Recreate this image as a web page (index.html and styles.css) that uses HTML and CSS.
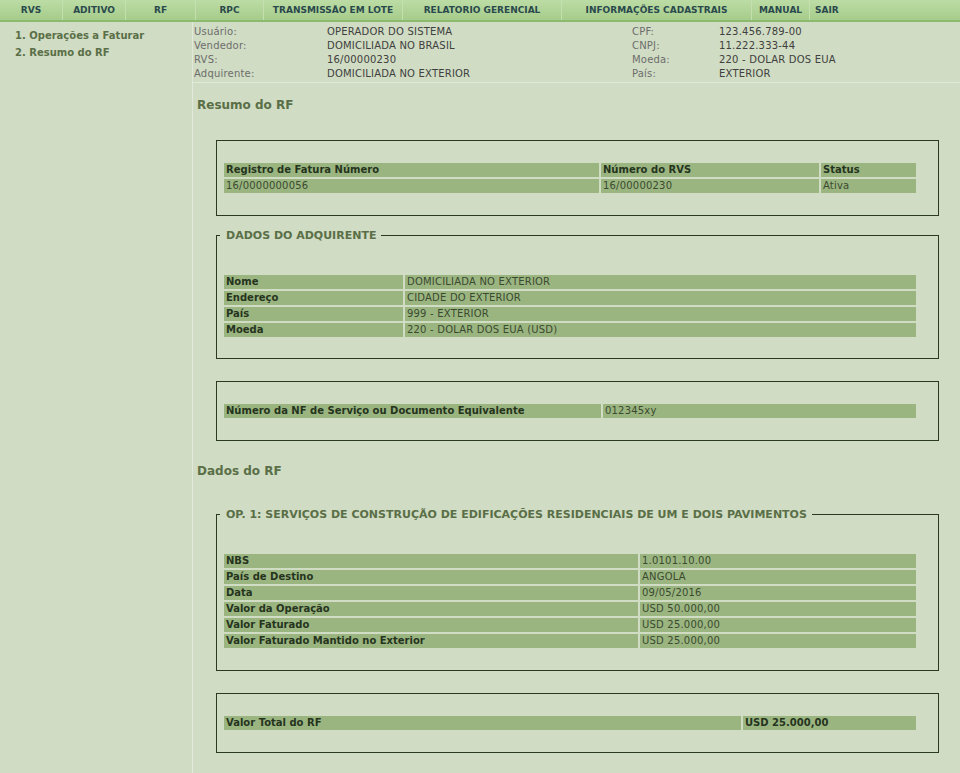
FILE: index.html
```html
<!DOCTYPE html>
<html lang="pt-BR">
<head>
<meta charset="utf-8">
<title>Resumo do RF</title>
<link rel="stylesheet" href="styles.css">
</head>
<body>
<nav class="topnav">
  <a class="nav-item w63" href="#">RVS</a>
  <a class="nav-item w63" href="#">ADITIVO</a>
  <a class="nav-item w70" href="#">RF</a>
  <a class="nav-item w68" href="#">RPC</a>
  <a class="nav-item w139" href="#">TRANSMISSÃO EM LOTE</a>
  <a class="nav-item w159" href="#">RELATORIO GERENCIAL</a>
  <a class="nav-item w190" href="#">INFORMAÇÕES CADASTRAIS</a>
  <a class="nav-item w58" href="#">MANUAL</a>
  <a class="nav-item nav-last" href="#">SAIR</a>
</nav>
<div class="layout">
  <aside class="sidebar">
    <a class="side-link" href="#">1. Operações a Faturar</a>
    <a class="side-link" href="#">2. Resumo do RF</a>
  </aside>
  <main class="content">
    <div class="userinfo">
      <span class="lbl">Usuário:</span><span class="val">OPERADOR DO SISTEMA</span>
      <span class="lbl">CPF:</span><span class="val">123.456.789-00</span>
      <span class="lbl">Vendedor:</span><span class="val">DOMICILIADA NO BRASIL</span>
      <span class="lbl">CNPJ:</span><span class="val">11.222.333-44</span>
      <span class="lbl">RVS:</span><span class="val">16/00000230</span>
      <span class="lbl">Moeda:</span><span class="val">220 - DOLAR DOS EUA</span>
      <span class="lbl">Adquirente:</span><span class="val">DOMICILIADA NO EXTERIOR</span>
      <span class="lbl">País:</span><span class="val">EXTERIOR</span>
    </div>

    <h2 class="section-title first">Resumo do RF</h2>

    <div class="box box-tight">
      <table class="grid">
        <colgroup><col class="c375"><col class="c218"><col></colgroup>
        <tr><th>Registro de Fatura Número</th><th>Número do RVS</th><th>Status</th></tr>
        <tr><td>16/0000000056</td><td>16/00000230</td><td>Ativa</td></tr>
      </table>
    </div>

    <fieldset class="box box-adq">
      <legend>DADOS DO ADQUIRENTE</legend>
      <table class="grid">
        <colgroup><col class="c179"><col></colgroup>
        <tr><th>Nome</th><td>DOMICILIADA NO EXTERIOR</td></tr>
        <tr><th>Endereço</th><td>CIDADE DO EXTERIOR</td></tr>
        <tr><th>País</th><td>999 - EXTERIOR</td></tr>
        <tr><th>Moeda</th><td>220 - DOLAR DOS EUA (USD)</td></tr>
      </table>
    </fieldset>

    <div class="box">
      <table class="grid">
        <colgroup><col class="c377"><col></colgroup>
        <tr><th>Número da NF de Serviço ou Documento Equivalente</th><td>012345xy</td></tr>
      </table>
    </div>

    <h2 class="section-title">Dados do RF</h2>

    <fieldset class="box">
      <legend>OP. 1: SERVIÇOS DE CONSTRUÇÃO DE EDIFICAÇÕES RESIDENCIAIS DE UM E DOIS PAVIMENTOS</legend>
      <table class="grid">
        <colgroup><col class="c414"><col></colgroup>
        <tr><th>NBS</th><td>1.0101.10.00</td></tr>
        <tr><th>País de Destino</th><td>ANGOLA</td></tr>
        <tr><th>Data</th><td>09/05/2016</td></tr>
        <tr><th>Valor da Operação</th><td>USD 50.000,00</td></tr>
        <tr><th>Valor Faturado</th><td>USD 25.000,00</td></tr>
        <tr><th>Valor Faturado Mantido no Exterior</th><td>USD 25.000,00</td></tr>
      </table>
    </fieldset>

    <div class="box box-last">
      <table class="grid">
        <colgroup><col class="c517"><col></colgroup>
        <tr><th>Valor Total do RF</th><th>USD 25.000,00</th></tr>
      </table>
    </div>
  </main>
</div>
</body>
</html>
```

FILE: styles.css
```css
* { box-sizing: border-box; }

html, body {
  margin: 0;
  padding: 0;
  overflow: hidden;
}

body {
  background: #d0dcc3;
  font-family: "DejaVu Sans", Verdana, sans-serif;
  font-size: 10px;
  color: #3a4a2f;
}

/* ---------- top navigation ---------- */
.topnav {
  display: flex;
  height: 22px;
  background: linear-gradient(#bcdca5, #a6cc8b);
  border-bottom: 2px solid #8cba6e;
}

.nav-item {
  display: block;
  flex: none;
  line-height: 20px;
  text-align: center;
  font-size: 9px;
  font-weight: bold;
  color: #2a494c;
  text-decoration: none;
  border-right: 1px solid #c4e0af;
}

.w63 { width: 63px; }
.w70 { width: 70px; }
.w68 { width: 68px; }
.w139 { width: 139px; }
.w159 { width: 159px; }
.w190 { width: 190px; }
.w58 { width: 58px; }

.nav-last {
  flex: 1;
  text-align: left;
  padding-left: 5px;
  border-right: none;
}

/* ---------- layout ---------- */
.layout {
  display: flex;
  min-height: calc(100vh - 22px);
}

.sidebar {
  flex: none;
  width: 193px;
  padding: 5px 0 0 15px;
  border-right: 1px solid #e2e9d9;
}

.side-link {
  display: block;
  line-height: 17px;
  font-weight: bold;
  color: #5a6f47;
  text-decoration: none;
}

.content {
  flex: 1;
  min-width: 0;
}

/* ---------- user info header ---------- */
.userinfo {
  display: grid;
  grid-template-columns: 133px 305px 87px 1fr;
  line-height: 14px;
  padding: 3px 0 1px 1px;
  border-bottom: 1px solid #e2e9d9;
  letter-spacing: 0.2px;
}

.lbl { color: #6d6d6d; }
.val { color: #404040; }

/* ---------- section titles ---------- */
.section-title {
  margin: 22px 0 29px 4px;
  font-size: 12px;
  line-height: 16px;
  font-weight: bold;
  color: #5a6f47;
}

.section-title.first {
  margin-top: 14px;
  margin-bottom: 27px;
}

/* ---------- boxes ---------- */
.box {
  display: block;
  margin: 0 21px 22px 23px;
  padding: 20px 20px 20px 5px;
  border: 1px solid #293a21;
  min-width: 0;
}

.box-tight { margin-bottom: 13px; }
.box-last { margin-bottom: 0; }

fieldset.box {
  padding-top: 31px;
}

fieldset.box-adq {
  padding-bottom: 19px;
}

fieldset.box legend {
  margin-left: -2px;
  padding: 0 5px 0 6px;
  font-size: 11px;
  line-height: 13px;
  font-weight: bold;
  color: #5a6f47;
}

/* ---------- data grids ---------- */
.grid {
  width: 100%;
  table-layout: fixed;
  border-collapse: separate;
  border-spacing: 2px;
}

.c375 { width: 375px; }
.c218 { width: 218px; }
.c179 { width: 179px; }
.c377 { width: 377px; }
.c414 { width: 414px; }
.c517 { width: 517px; }

.grid th,
.grid td {
  height: 14px;
  padding: 0 0 0 2px;
  line-height: 14px;
  font-size: 10px;
  text-align: left;
  white-space: nowrap;
  overflow: hidden;
  background: #9bb581;
}

.grid th {
  font-weight: bold;
  color: #25341d;
}

.grid td {
  font-weight: normal;
  color: #3a4a2f;
  letter-spacing: 0.2px;
}
```
